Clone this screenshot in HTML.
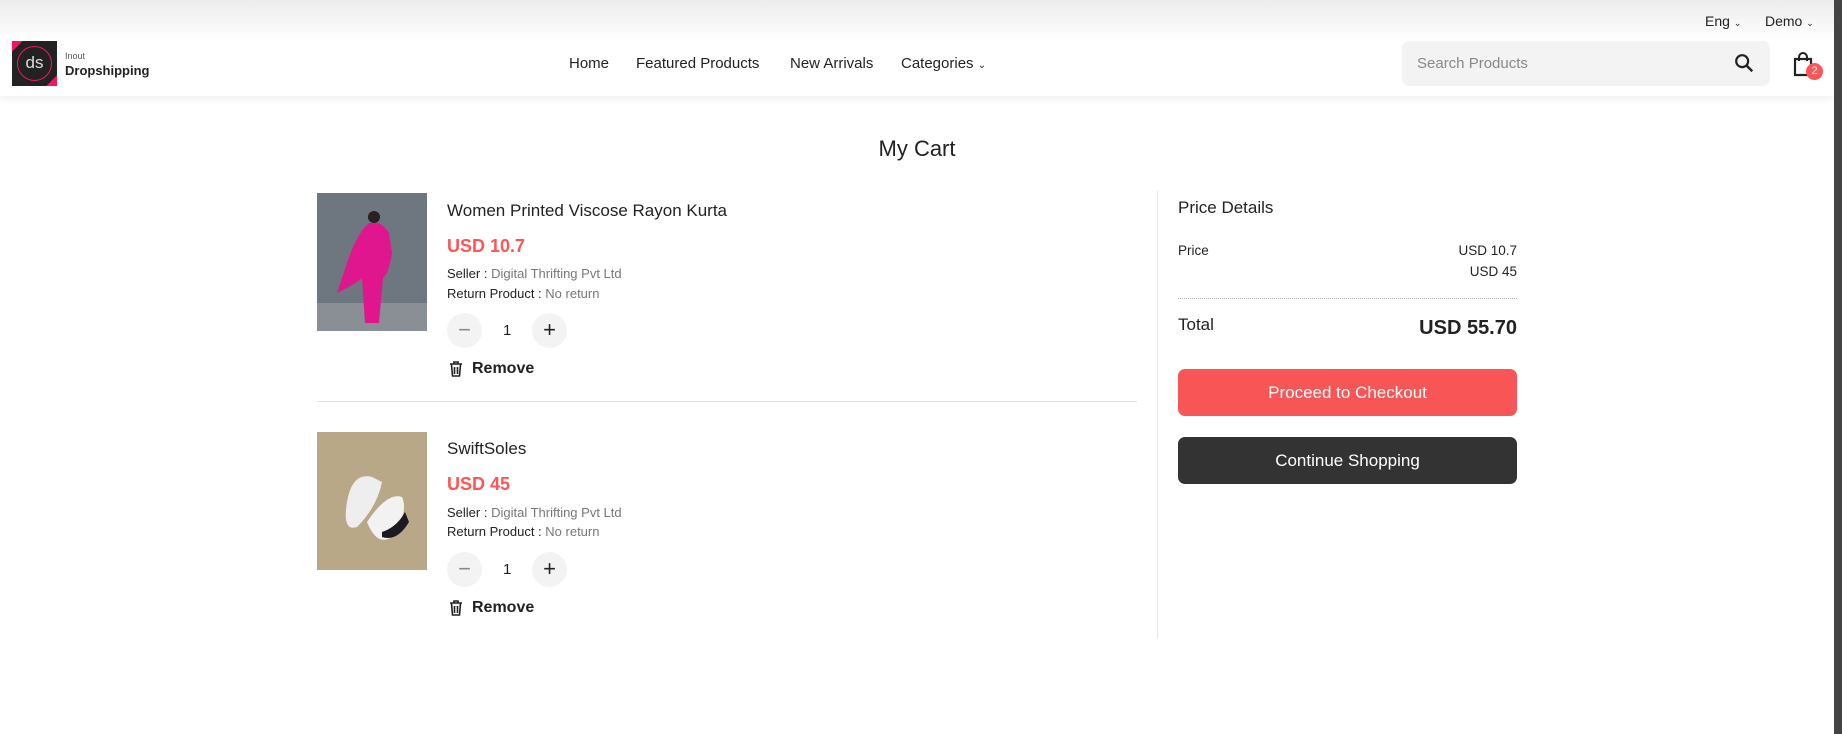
<!DOCTYPE html>
<html><head><meta charset="utf-8"><style>
*{margin:0;padding:0;box-sizing:border-box}
body{width:1842px;height:734px;background:#fff;font-family:"Liberation Sans",sans-serif;color:#222;position:relative;overflow:hidden}
.a{position:absolute;white-space:nowrap}
.top{position:absolute;left:0;top:0;width:1834px;height:41px;background:linear-gradient(#ececec,#fff)}
.hdr{position:absolute;left:0;top:41px;width:1834px;height:55px;background:#fff;box-shadow:0 4px 6px rgba(0,0,0,0.05)}
.nav{font-size:15px;color:#222;top:55px}
.circ{position:absolute;width:35px;height:35px;border-radius:50%;background:#f3f3f3;font-size:22px;text-align:center;line-height:34px;color:#222}
.lbl{font-size:13px;color:#222}
.lbl span{color:#777}
.btn{position:absolute;left:1178px;width:339px;height:47px;border-radius:7px;color:#fff;font-size:17px;text-align:center;line-height:47px}
</style></head><body>
<div class="top"></div>
<div class="hdr"></div>
<div class="a" style="left:1705px;top:13px;font-size:14px">Eng <span style="font-size:9px">&#8964;</span></div>
<div class="a" style="left:1765px;top:13px;font-size:14px">Demo <span style="font-size:9px">&#8964;</span></div>
<div class="a" style="left:12px;top:41px;width:45px;height:45px;background:#222;overflow:hidden">
<div style="position:absolute;left:-10px;top:-10px;width:18px;height:18px;background:#f0185a;transform:rotate(45deg)"></div>
<div style="position:absolute;right:-10px;bottom:-10px;width:18px;height:18px;background:#f0185a;transform:rotate(45deg)"></div>
<div style="position:absolute;left:5px;top:5px;width:35px;height:35px;border:1.5px solid #f0185a;border-radius:50%;color:#ddd;font-size:17px;text-align:center;line-height:31px">ds</div>
</div>
<div class="a" style="left:65px;top:51px;font-size:9px;color:#555">Inout</div>
<div class="a" style="left:65px;top:63px;font-size:13px;font-weight:bold;color:#222">Dropshipping</div>
<div class="a nav" style="left:569px">Home</div>
<div class="a nav" style="left:636px">Featured Products</div>
<div class="a nav" style="left:790px">New Arrivals</div>
<div class="a nav" style="left:901px">Categories <span style="font-size:10px">&#8964;</span></div>
<div class="a" style="left:1402px;top:41px;width:368px;height:45px;background:#f3f3f3;border-radius:7px"></div>
<div class="a" style="left:1417px;top:55px;font-size:15px;color:#888">Search Products</div>
<svg class="a" style="left:1733px;top:52px" width="22" height="22" viewBox="0 0 24 24"><circle cx="10" cy="10" r="6.5" fill="none" stroke="#222" stroke-width="2.4"/><path d="M15 15l6 6" stroke="#222" stroke-width="2.6"/></svg>
<svg class="a" style="left:1791px;top:51px" width="24" height="26" viewBox="0 0 24 26"><path d="M4 8h16v16H4z" fill="none" stroke="#222" stroke-width="2.2"/><path d="M8 10V6a4 4 0 0 1 8 0v4" fill="none" stroke="#222" stroke-width="2"/></svg>
<div class="a" style="left:1806px;top:63px;width:17px;height:17px;border-radius:50%;background:#f55;color:#fff;font-size:11px;text-align:center;line-height:17px">2</div>
<div class="a" style="left:1834px;top:0;width:8px;height:734px;background:#444"></div>

<div class="a" style="left:0;width:1834px;text-align:center;top:136px;font-size:22px;color:#222">My Cart</div>

<svg class="a" style="left:317px;top:193px" width="110" height="138"><rect width="110" height="138" fill="#6e7680"/><rect y="110" width="110" height="28" fill="#8a8f95"/><path d="M52 30 Q40 40 30 70 L20 100 Q40 90 45 85 L48 130 L62 130 L66 85 Q72 80 75 60 L72 40 Q65 30 60 30Z" fill="#e0168e"/><circle cx="57" cy="24" r="6" fill="#2a2020"/></svg>
<div class="a" style="left:447px;top:201px;font-size:17px">Women Printed Viscose Rayon Kurta</div>
<div class="a" style="left:447px;top:236px;font-size:18px;font-weight:bold;color:#f55">USD 10.7</div>
<div class="a lbl" style="left:447px;top:266px">Seller : <span>Digital Thrifting Pvt Ltd</span></div>
<div class="a lbl" style="left:447px;top:286px">Return Product : <span>No return</span></div>
<div class="circ" style="left:447px;top:313px;color:#888">&minus;</div>
<div class="a" style="left:503px;top:322px;font-size:15px">1</div>
<div class="circ" style="left:532px;top:313px">+</div>
<svg class="a" style="left:449px;top:361px" width="14" height="16" viewBox="0 0 14 16"><path d="M1 3h12M5 3V1h4v2M2.5 3.5l1 11.5h7l1-11.5M5.5 6v7M8.5 6v7" fill="none" stroke="#222" stroke-width="1.6"/></svg>
<div class="a" style="left:472px;top:360px;font-size:16px;font-weight:bold">Remove</div>
<div class="a" style="left:317px;top:401px;width:820px;height:1px;background:#e2e2e2"></div>

<svg class="a" style="left:317px;top:432px" width="110" height="138"><rect width="110" height="138" fill="#b9a887"/><path d="M30 70 Q35 40 55 45 L65 50 Q60 75 40 95 Q25 100 30 70Z" fill="#eee"/><path d="M50 90 Q70 60 85 65 Q92 80 75 105 Q60 115 50 90Z" fill="#f2f2f2"/><path d="M65 100 Q80 95 88 80 L92 90 Q80 110 65 105Z" fill="#1a1a22"/></svg>
<div class="a" style="left:447px;top:439px;font-size:17px">SwiftSoles</div>
<div class="a" style="left:447px;top:474px;font-size:18px;font-weight:bold;color:#f55">USD 45</div>
<div class="a lbl" style="left:447px;top:505px">Seller : <span>Digital Thrifting Pvt Ltd</span></div>
<div class="a lbl" style="left:447px;top:524px">Return Product : <span>No return</span></div>
<div class="circ" style="left:447px;top:552px;color:#888">&minus;</div>
<div class="a" style="left:503px;top:561px;font-size:15px">1</div>
<div class="circ" style="left:532px;top:552px">+</div>
<svg class="a" style="left:449px;top:600px" width="14" height="16" viewBox="0 0 14 16"><path d="M1 3h12M5 3V1h4v2M2.5 3.5l1 11.5h7l1-11.5M5.5 6v7M8.5 6v7" fill="none" stroke="#222" stroke-width="1.6"/></svg>
<div class="a" style="left:472px;top:599px;font-size:16px;font-weight:bold">Remove</div>

<div class="a" style="left:1157px;top:191px;width:1px;height:447px;background:#e6e6e6"></div>
<div class="a" style="left:1178px;top:198px;font-size:17px">Price Details</div>
<div class="a" style="left:1178px;top:243px;font-size:13.5px">Price</div>
<div class="a" style="left:1400px;width:117px;text-align:right;top:243px;font-size:13.5px">USD 10.7</div>
<div class="a" style="left:1400px;width:117px;text-align:right;top:264px;font-size:13.5px">USD 45</div>
<div class="a" style="left:1178px;top:298px;width:339px;border-top:1.5px dotted #aaa"></div>
<div class="a" style="left:1178px;top:315px;font-size:17px">Total</div>
<div class="a" style="left:1350px;width:167px;text-align:right;top:317px;font-size:20px;font-weight:bold">USD 55.70</div>
<div class="btn" style="top:369px;background:#f85556">Proceed to Checkout</div>
<div class="btn" style="top:437px;background:#333">Continue Shopping</div>
</body></html>
